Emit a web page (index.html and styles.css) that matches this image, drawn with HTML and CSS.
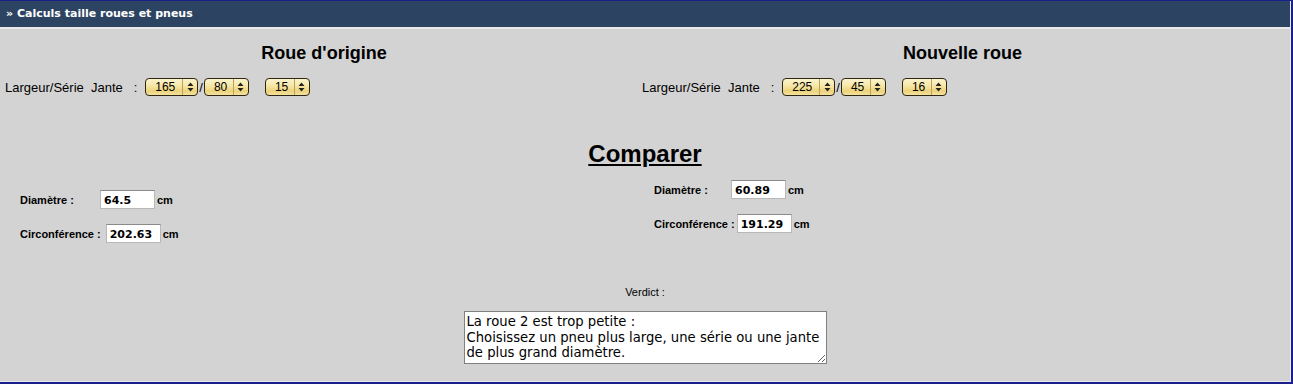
FILE: index.html
```html
<!DOCTYPE html>
<html lang="fr">
<head>
<meta charset="utf-8">
<title>Calculs taille roues et pneus</title>
<link rel="stylesheet" href="styles.css">
</head>
<body>
<div class="frame">
  <div class="panel">
    <div class="header">» Calculs taille roues et pneus</div>
    <div class="content">
      <div class="wheels">
        <div class="wheel wheel-left">
          <h2 class="wheel-title">Roue d'origine</h2>
          <div class="size-row">
            <span class="size-label">Largeur/Série&nbsp; Jante&nbsp;&nbsp; :</span>
            <span class="sel sel-w"><span class="sel-val">165</span><span class="sel-arr"><svg width="7" height="10" viewBox="0 0 7 10"><path d="M3.5 0.5L6.5 4H0.5z M3.5 9.5L6.5 6H0.5z" fill="#222"/></svg></span></span>
            <span class="slash">/</span>
            <span class="sel sel-s"><span class="sel-val">80</span><span class="sel-arr"><svg width="7" height="10" viewBox="0 0 7 10"><path d="M3.5 0.5L6.5 4H0.5z M3.5 9.5L6.5 6H0.5z" fill="#222"/></svg></span></span>
            <span class="sel sel-j"><span class="sel-val">15</span><span class="sel-arr"><svg width="7" height="10" viewBox="0 0 7 10"><path d="M3.5 0.5L6.5 4H0.5z M3.5 9.5L6.5 6H0.5z" fill="#222"/></svg></span></span>
          </div>
        </div>
        <div class="wheel wheel-right">
          <h2 class="wheel-title">Nouvelle roue</h2>
          <div class="size-row">
            <span class="size-label">Largeur/Série&nbsp; Jante&nbsp;&nbsp; :</span>
            <span class="sel sel-w"><span class="sel-val">225</span><span class="sel-arr"><svg width="7" height="10" viewBox="0 0 7 10"><path d="M3.5 0.5L6.5 4H0.5z M3.5 9.5L6.5 6H0.5z" fill="#222"/></svg></span></span>
            <span class="slash">/</span>
            <span class="sel sel-s"><span class="sel-val">45</span><span class="sel-arr"><svg width="7" height="10" viewBox="0 0 7 10"><path d="M3.5 0.5L6.5 4H0.5z M3.5 9.5L6.5 6H0.5z" fill="#222"/></svg></span></span>
            <span class="sel sel-j"><span class="sel-val">16</span><span class="sel-arr"><svg width="7" height="10" viewBox="0 0 7 10"><path d="M3.5 0.5L6.5 4H0.5z M3.5 9.5L6.5 6H0.5z" fill="#222"/></svg></span></span>
          </div>
        </div>
      </div>

      <h1 class="compare-title">Comparer</h1>

      <div class="results">
        <div class="result result-left">
          <div class="res-row">
            <span class="res-label res-label-d">Diamètre :</span>
            <input class="res-input" type="text" value="64.5" readonly>
            <span class="unit">cm</span>
          </div>
          <div class="res-row">
            <span class="res-label">Circonférence :</span>
            <input class="res-input" type="text" value="202.63" readonly>
            <span class="unit">cm</span>
          </div>
        </div>
        <div class="result result-right">
          <div class="res-row">
            <span class="res-label res-label-d">Diamètre :</span>
            <input class="res-input" type="text" value="60.89" readonly>
            <span class="unit">cm</span>
          </div>
          <div class="res-row">
            <span class="res-label">Circonférence :</span>
            <input class="res-input" type="text" value="191.29" readonly>
            <span class="unit">cm</span>
          </div>
        </div>
      </div>

      <div class="verdict">
        <div class="verdict-label">Verdict :</div>
        <textarea class="verdict-text" readonly>La roue 2 est trop petite :
Choisissez un pneu plus large, une série ou une jante de plus grand diamètre.</textarea>
      </div>
    </div>
  </div>
</div>
</body>
</html>
```

FILE: styles.css
```css
html, body {
  margin: 0;
  padding: 0;
  background: #ffffff;
}

body {
  font-family: "Liberation Sans", Arial, sans-serif;
  color: #000;
}

.frame {
  width: 1291px;
  border-top: 1px solid #1b1f8e;
  border-right: 2px solid #1b1f8e;
  border-bottom: 2px solid #1b1f8e;
}

.panel {
  border-right: 1px solid #ececec;
  border-bottom: 1px solid #ececec;
  background: #d3d3d3;
}

.header {
  height: 26px;
  line-height: 26px;
  background: #2c4461;
  border-bottom: 2px solid #e8e8e8;
  color: #ffffff;
  font-family: "DejaVu Sans", Verdana, sans-serif;
  font-weight: bold;
  font-size: 11px;
  padding-left: 6px;
}

.content {
  height: 352px;
  box-sizing: border-box;
  padding-top: 14px;
}

.wheels {
  display: grid;
  grid-template-columns: 637px 1fr;
}

.wheel-title {
  margin: 0;
  font-size: 18px;
  line-height: 21px;
  font-weight: bold;
  text-align: center;
}

.wheel-left .wheel-title {
  padding-left: 11px;
}

.wheel-right .wheel-title {
  padding-right: 2px;
}

.size-row {
  display: flex;
  align-items: center;
  margin-top: 14px;
  padding-left: 5px;
  height: 18px;
  font-size: 13px;
}

.size-label {
  margin-right: 8px;
  white-space: nowrap;
}

.sel {
  display: inline-flex;
  align-items: stretch;
  box-sizing: border-box;
  height: 18px;
  border: 1px solid #2d2612;
  border-radius: 4px;
  background: linear-gradient(#fbf3cc 0%, #f6e6a4 45%, #ecd27a 75%, #f3e2a0 100%);
  font-size: 12px;
  line-height: 16px;
}

.sel-val {
  flex: 1;
  padding-left: 9px;
}

.sel-arr {
  width: 14px;
  border-left: 1px solid #b9a15a;
  display: flex;
  align-items: center;
  justify-content: center;
}

.sel-w { width: 53px; }
.sel-s { width: 45px; }
.sel-j { width: 45px; margin-left: 16px; }

.slash {
  margin: 0 1px;
}

.compare-title {
  margin: 44px 0 0;
  font-size: 24px;
  line-height: 28px;
  font-weight: bold;
  text-align: center;
  text-decoration: underline;
  text-underline-offset: 2px;
}

.results {
  display: grid;
  grid-template-columns: 637px 1fr;
  align-items: start;
}

.result {
  display: flex;
  flex-direction: column;
  gap: 15px;
}

.result-left {
  padding-top: 22px;
  padding-left: 20px;
}

.result-right {
  padding-top: 12px;
  padding-left: 17px;
}

.res-row {
  display: flex;
  align-items: center;
  height: 19px;
  font-size: 11px;
  font-weight: bold;
}

.res-label {
  margin-right: 5px;
  white-space: nowrap;
}

.res-label-d {
  width: 75px;
}

.result-right .res-label {
  margin-right: 2px;
}

.res-input {
  box-sizing: border-box;
  width: 55px;
  height: 19px;
  margin: 0;
  padding: 1px 3px 0;
  border: 1px solid #b8b8b8;
  border-top-color: #8a8a8a;
  background: #ffffff;
  font-family: "DejaVu Sans", Verdana, sans-serif;
  font-weight: bold;
  font-size: 11px;
  color: #000;
  outline: none;
}

.unit {
  margin-left: 2px;
}

.verdict {
  display: flex;
  flex-direction: column;
  align-items: center;
  margin-top: 43px;
}

.verdict-label {
  font-size: 11px;
  line-height: 13px;
}

.verdict-text {
  box-sizing: border-box;
  width: 363px;
  height: 53px;
  margin-top: 12px;
  padding: 2px 0 2px 2px;
  border: 1px solid #808080;
  background: #ffffff;
  font-family: "DejaVu Sans", Verdana, sans-serif;
  font-size: 13.2px;
  line-height: 15.5px;
  color: #000;
  overflow: hidden;
  outline: none;
}
```
